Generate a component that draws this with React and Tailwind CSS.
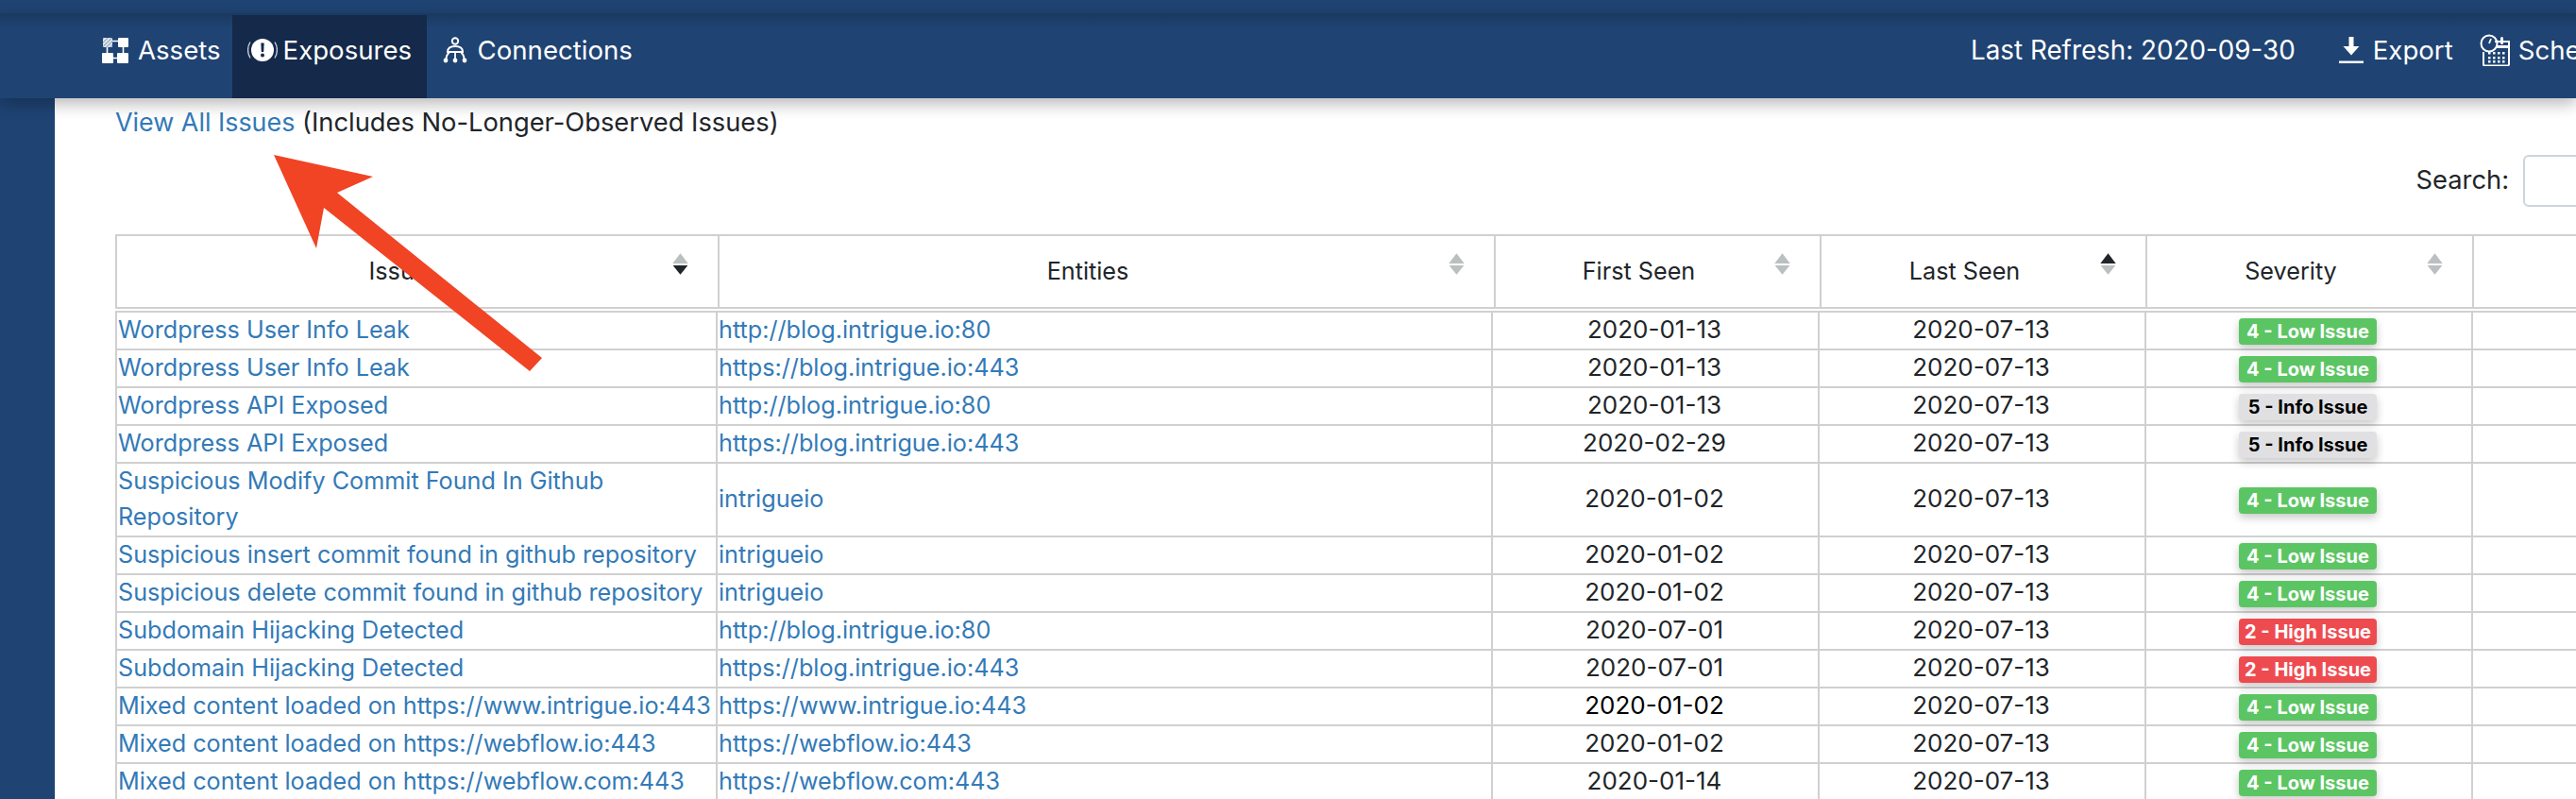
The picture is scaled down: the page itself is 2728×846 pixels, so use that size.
const LOW = { label: "4 - Low Issue", cls: "bg-[#5cc563] text-white" };
const INFO = { label: "5 - Info Issue", cls: "bg-[#e0e0e3] text-black" };
const HIGH = { label: "2 - High Issue", cls: "bg-[#ee4b50] text-white" };

const rows = [
  ["Wordpress User Info Leak", "http://blog.intrigue.io:80", "2020-01-13", "2020-07-13", LOW],
  ["Wordpress User Info Leak", "https://blog.intrigue.io:443", "2020-01-13", "2020-07-13", LOW],
  ["Wordpress API Exposed", "http://blog.intrigue.io:80", "2020-01-13", "2020-07-13", INFO],
  ["Wordpress API Exposed", "https://blog.intrigue.io:443", "2020-02-29", "2020-07-13", INFO],
  ["Suspicious Modify Commit Found In Github Repository", "intrigueio", "2020-01-02", "2020-07-13", LOW],
  ["Suspicious insert commit found in github repository", "intrigueio", "2020-01-02", "2020-07-13", LOW],
  ["Suspicious delete commit found in github repository", "intrigueio", "2020-01-02", "2020-07-13", LOW],
  ["Subdomain Hijacking Detected", "http://blog.intrigue.io:80", "2020-07-01", "2020-07-13", HIGH],
  ["Subdomain Hijacking Detected", "https://blog.intrigue.io:443", "2020-07-01", "2020-07-13", HIGH],
  ["Mixed content loaded on https://www.intrigue.io:443", "https://www.intrigue.io:443", "2020-01-02", "2020-07-13", LOW],
  ["Mixed content loaded on https://webflow.io:443", "https://webflow.io:443", "2020-01-02", "2020-07-13", LOW],
  ["Mixed content loaded on https://webflow.com:443", "https://webflow.com:443", "2020-01-14", "2020-07-13", LOW],
];

function AssetsIcon() {
  return (
    <svg width="28" height="28" viewBox="0 0 28 28" className="shrink-0">
      <defs>
        <pattern id="hatch" width="3" height="3" patternUnits="userSpaceOnUse" patternTransform="rotate(45)">
          <rect width="3" height="3" fill="#9fb0c8" />
          <rect width="1.2" height="3" fill="#ffffff" />
        </pattern>
      </defs>
      <rect x="1" y="1" width="10" height="10" fill="url(#hatch)" />
      <rect x="17" y="1" width="11" height="10" fill="#fff" rx="1" />
      <rect x="0" y="17" width="12" height="11" fill="#fff" rx="1" />
      <rect x="16" y="17" width="12" height="11" fill="#fff" rx="1" />
      <path d="M11 4.5h6M11 22.5h5M5.5 11v6M22.5 11v6" stroke="#fff" strokeWidth="1.6" />
    </svg>
  );
}

function ExposureIcon() {
  return (
    <svg width="32" height="28" viewBox="0 0 32 28" className="shrink-0">
      <circle cx="16" cy="14" r="12" fill="#fff" />
      <path d="M14.300 6.500h3.400l-.5 9.500h-2.400z" fill="#15294a" />
      <circle cx="16" cy="19.500" r="2" fill="#15294a" />
      <path d="M3 5.500C-.2 10.500-.2 17.500 3 22.500M29 5.500c3.200 5 3.200 12 0 17" fill="none" stroke="#c9d2df" strokeWidth="1.300" />
    </svg>
  );
}

function ConnectionsIcon() {
  return (
    <svg width="26" height="28" viewBox="0 0 26 28" className="shrink-0">
      <circle cx="13" cy="4.500" r="3.200" fill="none" stroke="#fff" strokeWidth="2" />
      <path d="M5 16c0-4 3.500-6 8-6s8 2 8 6z" fill="none" stroke="#fff" strokeWidth="2" />
      <path d="M13 16v7M7 16c-2 2-3.500 4-3.500 7M19 16c2 2 3.500 4 3.500 7" fill="none" stroke="#fff" strokeWidth="1.800" />
      <circle cx="3" cy="25" r="2.400" fill="#fff" />
      <circle cx="13" cy="25" r="2.400" fill="#fff" />
      <circle cx="23" cy="25" r="2.400" fill="#fff" />
    </svg>
  );
}

function ExportIcon() {
  return (
    <svg width="26" height="28" viewBox="0 0 26 28" className="shrink-0">
      <path d="M10.500 0h5v10h6L13 19.500 4.500 10h6z" fill="#fff" />
      <rect x="0" y="25.500" width="26" height="2.500" fill="#fff" />
    </svg>
  );
}

function ScheduleIcon() {
  return (
    <svg width="32" height="34" viewBox="0 0 32 34" className="shrink-0">
      <path d="M16 8h15v24a1.500 1.500 0 0 1-1.500 1.500H5.500A1.500 1.500 0 0 1 4 32V19" fill="none" stroke="#fff" strokeWidth="2" />
      <path d="M17 12h14v3H17z" fill="#fff" />
      <circle cx="10" cy="10" r="8.500" fill="none" stroke="#fff" strokeWidth="2" />
      <path d="M10 10l2-5" stroke="#fff" strokeWidth="1.800" />
      <rect x="22" y="3" width="3" height="8" rx="1.500" fill="#fff" />
      {[9, 14, 19, 24].map((x) =>
        [19, 24, 28].map((y) => <rect key={`${x}-${y}`} x={x} y={y} width="2.500" height="2.500" fill="#fff" />)
      )}
    </svg>
  );
}

function SortIcon({ active }) {
  const up = active === "up" ? "#212529" : "#bbbfbf";
  const down = active === "down" ? "#212529" : "#bbbfbf";
  return (
    <svg width="17" height="23" viewBox="0 0 17 23" className="absolute top-[18px] right-[31px]">
      <path d="M8.500 0.300 16.700 11H0.300z" fill={up} />
      <path d="M0.600 13H16.400L8.500 22.700z" fill={down} />
    </svg>
  );
}

function Header({ children, active }) {
  return (
    <th className="relative border-2 border-[#d0d0d0] h-[77px] p-0 pr-[40px] font-normal text-center align-middle text-[#212529]">
      {children}
      <SortIcon active={active} />
    </th>
  );
}

const tdClass = "border-2 border-[#d0d0d0] p-0 px-[1px] h-[40px] leading-[38px] align-middle";
const centerClass = "border-2 border-[#d0d0d0] p-0 pl-[1px] pr-[3px] h-[40px] leading-[38px] align-middle text-center";

export default function App() {
  return (
    <div className="w-[2728px] h-[846px] overflow-hidden relative bg-[#1f4373] font-['Inter',sans-serif] text-[25.2px] text-[#212529]">
      <div className="h-[14px] bg-[#1f4373]" />
      <nav className="relative z-10 h-[90px] flex items-stretch text-white text-[27.6px] bg-[linear-gradient(#1b3960,#1f4373_16px)] shadow-[0_6px_16px_rgba(0,0,0,0.28)]">
        <div className="flex items-start pt-[25px] pl-[108px] pr-[12px] gap-[10px] h-full">
          <AssetsIcon />
          <span className="leading-[28px]">Assets</span>
        </div>
        <div className="flex items-start self-end pt-[23px] pl-[16px] gap-[6px] h-[88px] w-[206px] bg-[#15294a]">
          <ExposureIcon />
          <span className="leading-[28px]">Exposures</span>
        </div>
        <div className="flex items-start pt-[25px] pl-[17px] gap-[11px] h-full">
          <ConnectionsIcon />
          <span className="leading-[28px]">Connections</span>
        </div>
        <div className="flex items-start pt-[25px] ml-auto w-[641px] shrink-0 overflow-hidden h-full">
          <span className="leading-[28px] whitespace-nowrap text-[27.8px]">Last Refresh: 2020-09-30</span>
          <div className="flex gap-[10px] ml-[46px]">
            <ExportIcon />
            <span className="leading-[28px]">Export</span>
          </div>
          <div className="flex gap-[9px] ml-[28px] -mt-[3px]">
            <ScheduleIcon />
            <span className="leading-[28px] mt-[3px] whitespace-nowrap">Schedule</span>
          </div>
        </div>
      </nav>
      <div className="flex h-[742px]">
        <aside className="w-[58px] shrink-0 bg-[#1f4373]" />
        <main className="bg-white w-[2944px] shrink-0 pl-[64px] pt-[6px]">
          <p className="leading-[39px] h-[39px] text-[27.3px]">
            <a className="text-[#337ab7] text-[26.9px]">View All Issues</a> (Includes No-Longer-Observed Issues)
          </p>
          <div className="flex justify-end items-center gap-[15px] mt-[15px] text-[27.3px]">
            <label>Search:</label>
            <input className="w-[330px] h-[55px] border-2 border-[#ced4da] rounded-[6px] bg-white" />
          </div>
          <table className="table-fixed border-collapse w-[2880px] mt-[29px] bg-white">
            <colgroup>
              <col className="w-[638px]" />
              <col className="w-[822px]" />
              <col className="w-[345px]" />
              <col className="w-[345px]" />
              <col className="w-[346px]" />
              <col />
            </colgroup>
            <thead>
              <tr>
                <Header active="down">Issue</Header>
                <Header>Entities</Header>
                <Header>First Seen</Header>
                <Header active="up">Last Seen</Header>
                <Header>Severity</Header>
                <Header />
              </tr>
            </thead>
          </table>
          <table className="table-fixed border-collapse w-[2880px] mt-[2px] bg-white">
            <colgroup>
              <col className="w-[636px]" />
              <col className="w-[821px]" />
              <col className="w-[346px]" />
              <col className="w-[346px]" />
              <col className="w-[346px]" />
              <col />
            </colgroup>
            <tbody>
              {rows.map((r, i) => (
                <tr key={i}>
                  <td className={tdClass}><a className="inline-block -translate-y-px text-[#337ab7]">{r[0]}</a></td>
                  <td className={tdClass}><a className="inline-block -translate-y-px text-[#337ab7]">{r[1]}</a></td>
                  <td className={`${centerClass} text-[26px] ${i === 9 ? "text-black" : ""}`}><span className="inline-block -translate-y-px">{r[2]}</span></td>
                  <td className={`${centerClass} text-[26px]`}><span className="inline-block -translate-y-px">{r[3]}</span></td>
                  <td className={centerClass}>
                    <span className={`inline-flex items-center justify-center w-[146px] h-[28px] rounded-[4px] text-[20px] font-bold leading-none -translate-y-px shadow-[0_4px_10px_rgba(0,0,0,0.22)] ${r[4].cls}`}>
                      {r[4].label}
                    </span>
                  </td>
                  <td className={tdClass} />
                </tr>
              ))}
            </tbody>
          </table>
        </main>
      </div>
      <svg width="2728" height="846" className="absolute inset-0 z-20 pointer-events-none">
        <polygon points="290,164 395,187 357,204 574,379 561,393 343,220 335,263" fill="#f04425" />
      </svg>
    </div>
  );
}
